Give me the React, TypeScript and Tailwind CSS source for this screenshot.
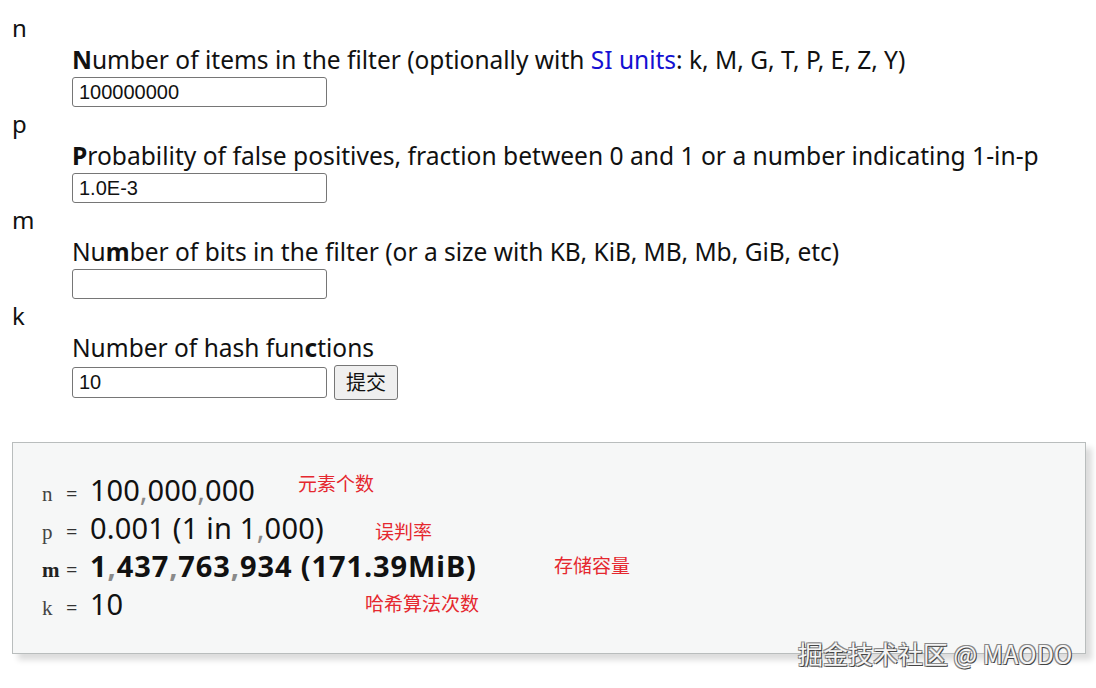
import React from "react";

function Comma() {
  return <span className="text-[#8a8a8a]">,</span>;
}

export default function App() {
  return (
    <div className="relative min-h-[688px] bg-white pt-[12px] pl-[12px] pr-[10px] font-['Noto_Sans','Noto_Sans_CJK_SC',sans-serif] text-[#111]">
      <dl>
        <dt className="h-[32px] leading-[32px] text-[24px]">n</dt>
        <dd className="ml-[60px]">
          <div className="h-[32px] leading-[32px] text-[24.5px] whitespace-nowrap">
            <b>N</b>umber of items in the filter (optionally with{" "}
            <a className="text-[#1410d2]" href="#">SI units</a>: k, M, G, T, P, E, Z, Y)
          </div>
          <div className="h-[32px] flex items-center">
            <input
              defaultValue="100000000"
              className="w-[255px] h-[30px] border border-[#767676] rounded-[3px] px-[6px] text-[20px] font-['Liberation_Sans',Arial,sans-serif] bg-white outline-none"
            />
          </div>
        </dd>
        <dt className="h-[32px] leading-[32px] text-[24px]">p</dt>
        <dd className="ml-[60px]">
          <div className="h-[32px] leading-[32px] text-[24.6px] whitespace-nowrap">
            <b>P</b>robability of false positives, fraction between 0 and 1 or a number indicating 1-in-p
          </div>
          <div className="h-[32px] flex items-center">
            <input
              defaultValue="1.0E-3"
              className="w-[255px] h-[30px] border border-[#767676] rounded-[3px] px-[6px] text-[20px] font-['Liberation_Sans',Arial,sans-serif] bg-white outline-none"
            />
          </div>
        </dd>
        <dt className="h-[32px] leading-[32px] text-[24px]">m</dt>
        <dd className="ml-[60px]">
          <div className="h-[32px] leading-[32px] text-[24.5px] whitespace-nowrap">
            Nu<b>m</b>ber of bits in the filter (or a size with KB, KiB, MB, Mb, GiB, etc)
          </div>
          <div className="h-[32px] flex items-center">
            <input
              defaultValue=""
              className="w-[255px] h-[30px] border border-[#767676] rounded-[3px] px-[6px] text-[20px] font-['Liberation_Sans',Arial,sans-serif] bg-white outline-none"
            />
          </div>
        </dd>
        <dt className="h-[32px] leading-[32px] text-[24px]">k</dt>
        <dd className="ml-[60px]">
          <div className="h-[32px] leading-[32px] text-[24.5px] whitespace-nowrap">
            Number of hash fun<b>c</b>tions
          </div>
          <div className="h-[36px] flex items-center gap-[7px]">
            <input
              defaultValue="10"
              className="w-[255px] h-[31px] border border-[#767676] rounded-[3px] px-[6px] text-[20px] font-['Liberation_Sans',Arial,sans-serif] bg-white outline-none"
            />
            <button className="w-[64px] h-[35px] border border-[#767676] rounded-[3px] bg-[#efefef] text-[20px] text-[#111] font-['Noto_Sans_CJK_SC',sans-serif]">
              提交
            </button>
          </div>
        </dd>
      </dl>

      <div className="relative mt-[42px] border border-[#b9bdbd] bg-[#f6f7f7] pt-[28px] pb-[30px] pl-[29px] shadow-[6px_6px_6px_rgba(0,0,0,0.14)]">
        <div className="h-[38px] flex items-baseline leading-[38px]">
          <span className="w-[24px] text-[21px] text-[#444] font-['Liberation_Serif','DejaVu_Serif',serif]">n</span>
          <span className="w-[24px] text-[20px] text-[#333]">=</span>
          <span className="text-[29px]">100<Comma />000<Comma />000</span>
        </div>
        <div className="h-[38px] flex items-baseline leading-[38px]">
          <span className="w-[24px] text-[21px] text-[#444] font-['Liberation_Serif','DejaVu_Serif',serif]">p</span>
          <span className="w-[24px] text-[20px] text-[#333]">=</span>
          <span className="text-[29px] tracking-[0.2px]">0.001 (1 in 1<Comma />000)</span>
        </div>
        <div className="h-[38px] flex items-baseline leading-[38px]">
          <span className="w-[24px] text-[21px] text-[#222] font-bold font-['Liberation_Serif','DejaVu_Serif',serif]">m</span>
          <span className="w-[24px] text-[20px] text-[#333]">=</span>
          <span className="text-[29px] font-bold tracking-[0.9px]">1<Comma />437<Comma />763<Comma />934 (171.39MiB)</span>
        </div>
        <div className="h-[38px] flex items-baseline leading-[38px]">
          <span className="w-[24px] text-[21px] text-[#444] font-['Liberation_Serif','DejaVu_Serif',serif]">k</span>
          <span className="w-[24px] text-[20px] text-[#333]">=</span>
          <span className="text-[29px]">10</span>
        </div>

        <span className="absolute left-[285px] top-[28px] leading-[24px] text-[19px] text-[#e5282f] font-['Noto_Sans_CJK_SC',sans-serif]">元素个数</span>
        <span className="absolute left-[362px] top-[76px] leading-[24px] text-[19px] text-[#e5282f] font-['Noto_Sans_CJK_SC',sans-serif]">误判率</span>
        <span className="absolute left-[541px] top-[110px] leading-[24px] text-[19px] text-[#e5282f] font-['Noto_Sans_CJK_SC',sans-serif]">存储容量</span>
        <span className="absolute left-[352px] top-[148px] leading-[24px] text-[19px] text-[#e5282f] font-['Noto_Sans_CJK_SC',sans-serif]">哈希算法次数</span>
      </div>

      <span className="absolute left-[798px] top-[637px] leading-[32px] text-[25px] text-[#f5f5f5] whitespace-nowrap font-['Noto_Sans_CJK_SC',sans-serif] [text-shadow:1px_1px_0_#444,-1px_-1px_0_#888,1px_-1px_0_#888,-1px_1px_0_#888]">
        掘金技术社区 @ MAODO
      </span>
    </div>
  );
}
